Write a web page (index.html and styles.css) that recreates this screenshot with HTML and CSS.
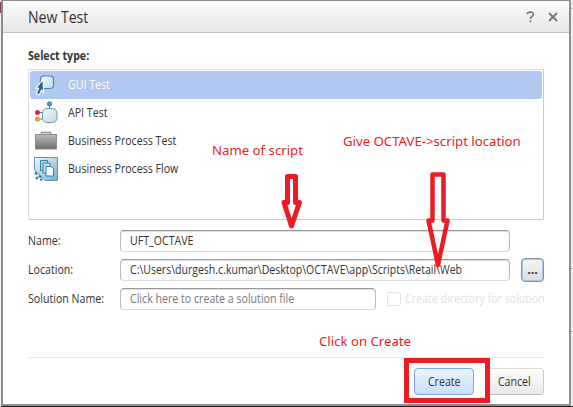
FILE: index.html
```html
<!DOCTYPE html>
<html lang="en">
<head>
<meta charset="utf-8">
<title>New Test</title>
<link rel="stylesheet" href="styles.css">
</head>
<body>
<main class="dialog">
  <header class="titlebar">
    <h1><span class="t">New Test</span></h1>
    <svg class="help" width="9" height="12" viewBox="0 0 9 12"><path d="M1.200 3.200C1.200 .5 7.400.3 7.400 3.200 7.400 5.300 4.400 5.300 4.400 8M4.400 9.300v2" fill="none" stroke="#777" stroke-width="1.600"/></svg>
    <svg width="10" height="10" viewBox="0 0 10 10"><path d="M1 1l8 8M9 1L1 9" stroke="#777" stroke-width="1.800"/></svg>
  </header>
  <section class="content">
    <h2><span class="t">Select type:</span></h2>
    <ul class="types">
      <li class="selected">
        <svg width="24" height="24" viewBox="0 0 24 24"><defs><linearGradient id="pane" x2="1" y2="1"><stop stop-color="#f4f8fa"/><stop offset="1" stop-color="#c3d8e2"/></linearGradient></defs><rect x="6.500" y="3" width="13" height="12.500" rx="3.500" fill="url(#pane)" stroke="#4d85a5" stroke-width="1.200"/><path d="M9 6.500L2 15.200l2.600.1-2.300 5.200 2.900 1.200 2.400-4.700 2 2.600z" fill="#25607f" stroke="#fff" stroke-width="1.100"/></svg>
        <span class="t">GUI Test</span></li>
      <li>
        <svg width="24" height="24" viewBox="0 0 24 24"><path d="M15.500 3v5M4 11.500h6M4 18h6" stroke="#777"/><rect x="8.500" y="7.500" width="14.500" height="14" rx="4.500" fill="url(#pane)" stroke="#6b9ab4"/><circle cx="15.500" cy="2.800" r="2.600" fill="#4b8fc4"/><circle cx="3.500" cy="11.500" r="2.500" fill="#d92c36"/><circle cx="3.500" cy="18" r="2.600" fill="#ef9a42"/></svg>
        <span class="t">API Test</span></li>
      <li>
        <svg width="24" height="24" viewBox="0 0 24 24"><defs><linearGradient id="case" x2="0" y2="1"><stop stop-color="#bbb"/><stop offset="1" stop-color="#6e6e6e"/></linearGradient></defs><path d="M7.500 6V3.500h9V6" fill="none" stroke="#8b8b8b" stroke-width="1.300"/><rect x="1.500" y="5.500" width="21" height="14.500" fill="url(#case)" stroke="#8b8b8b"/></svg>
        <span class="t">Business Process Test</span></li>
      <li>
        <svg width="24" height="24" viewBox="0 0 24 24"><defs><linearGradient id="flow" x2="1" y2="1"><stop stop-color="#f4f9fb"/><stop offset="1" stop-color="#78acc8"/></linearGradient></defs><path d="M.5.500h23v23H11L.5 13z" fill="url(#flow)" stroke="#5b96b7"/><g stroke="#2f83ae"><path fill="#b4d5e6" d="M6.500 3.500h7v10h-7z"/><path fill="#c8e1ed" d="M9 6h7v10H9z"/><path fill="#f6fafc" d="M12 9.500h5l2.500 2V19H12z"/></g><path d="M1 15.500l2 2M5 18.500l2 2M2 22l2-2M6.500 23.500l1.500-1.500" stroke="#287aa4" stroke-width="2.200"/></svg>
        <span class="t">Business Process Flow</span></li>
    </ul>
    <div class="row">
      <label><span class="t">Name:</span></label>
      <div class="field"><span class="t">UFT_OCTAVE</span></div>
    </div>
    <div class="row">
      <label><span class="t">Location:</span></label>
      <div class="field"><span class="t path">C:\Users\durgesh.c.kumar\Desktop\OCTAVE\app\Scripts\Retail\Web</span></div>
      <button class="browse">...</button>
    </div>
    <div class="row">
      <label><span class="t">Solution Name:</span></label>
      <div class="field short"><span class="t">Click here to create a solution file</span></div>
      <div class="check"><i></i><span class="t">Create directory for solution</span></div>
    </div>
    <footer>
      <button class="create"><span class="t">Create</span></button>
      <button class="cancel"><span class="t">Cancel</span></button>
    </footer>
  </section>
</main>
<p class="note note-name">Name of script</p>
<p class="note note-location">Give OCTAVE-&gt;script location</p>
<p class="note note-create">Click on Create</p>
<svg class="arrow arrow-name" width="22" height="56" viewBox="0 0 22 56"><path d="M6.500 2.500h8v26h4L10.500 52 3 28.500h3.500z"/></svg>
<svg class="arrow arrow-location" width="26" height="96" viewBox="0 0 26 96"><path d="M7.500 2.500h11v46h4L13 93 3.500 48.500h4z"/></svg>
<div class="highlight"></div>
</body>
</html>
```
FILE: styles.css
```css
* { box-sizing: border-box; }
body {
  margin: 0;
  width: 573px;
  height: 407px;
  padding: 0 2px 1px 1px;
  position: relative;
  overflow: hidden;
  background: linear-gradient(#221f22, #221f22) 1px 406px / 572px 1px no-repeat,
    linear-gradient(#8b4068, #8b4068) 0 2px / 1px 11px no-repeat,
    linear-gradient(#bbb, #bbb) 570px 8px / 3px 1px no-repeat,
    linear-gradient(#bbb, #bbb) 570px 268px / 3px 1px no-repeat,
    linear-gradient(#bbb, #bbb) 570px 331px / 3px 1px no-repeat,
    #f0f0f2;
  font: 12.5px/16px "Open Sans", sans-serif;
  color: #333;
}
h1, h2, p, ul { margin: 0; padding: 0; }
.dialog {
  width: 570px;
  height: 406px;
  border: 2px solid #8e8e8e;
  border-top-width: 1px;
  background: #fff;
}
.t {
  display: inline-block;
  white-space: nowrap;
  transform: scaleX(.85);
  transform-origin: 0 50%;
}
.titlebar {
  display: flex;
  align-items: center;
  height: 32px;
  padding: 0 11px 0 25px;
  background: linear-gradient(#fcfcfc, #e7e7e7);
  border-bottom: 1px solid #c4c4c4;
}
h1 { flex: 1; font-size: 16.5px; font-weight: 400; line-height: 30px; }
.help { margin-right: 13px; }
.content { padding: 14px 25px 0; }
h2 { font-size: 12.5px; line-height: 18px; height: 22px; }
.types {
  list-style: none;
  width: 516px;
  height: 151px;
  padding: 1px;
  border: 1px solid #c9c9c9;
  border-top-color: #ddd;
  border-left-color: #ddd;
}
.types li {
  display: flex;
  align-items: center;
  gap: 10px;
  height: 28px;
  padding-left: 4px;
  border-radius: 3px;
}
.types .selected { background: #b1c8f0; color: #fff; }
.row { display: flex; height: 22px; margin-top: 7px; align-items: center; }
.types + .row { margin-top: 10px; }
.row label { width: 92px; }
.field {
  width: 390px;
  height: 22px;
  padding: 2px 9px;
  border: 1px solid #aaa;
  border-color: #999 #bbb #ddd;
  border-radius: 4px;
  box-shadow: inset 0 1px 1px #ddd;
}
.path { transform: scaleX(.842); }
.short { width: 257px; color: #777; }
button {
  font: inherit;
  color: #333;
  padding: 0;
  border: 1px solid #aaa;
  border-radius: 4px;
  background: linear-gradient(#fff, #e8e8e8);
}
.browse {
  width: 23px;
  height: 24px;
  margin-left: 11px;
  border-color: #888f9b;
  background: linear-gradient(#f5f5f5, #dedede);
  box-shadow: inset 0 0 0 1px #a9c9f5;
  font-weight: 700;
}
.check { display: flex; align-items: center; margin-left: 11px; color: #e3e3e3; width: 157px; }
.check i { width: 14px; height: 14px; margin-right: 4px; border: 1px solid #e3e3e3; border-radius: 2px; flex: none; }
footer {
  display: flex;
  justify-content: flex-end;
  gap: 11px;
  width: 516px;
  margin-top: 47px;
  padding-top: 10px;
  border-top: 1px solid #e7e7e7;
}
footer button { width: 59px; height: 27px; border-color: #ddd #ccc #bbb; }
footer .create { width: 60px; background: linear-gradient(#edf4fe, #c9defb); border-color: #77a8e8; }
footer .t { transform-origin: 50% 50%; }
.note { position: absolute; color: #ed1c24; font: 13.2px/18px "Noto Sans", sans-serif; white-space: nowrap; }
.note-name { left: 212px; top: 141px; }
.note-location { left: 343px; top: 132px; }
.note-create { left: 319px; top: 332px; }
.arrow { position: absolute; fill: none; stroke: #ed1c24; stroke-width: 5; stroke-linejoin: round; }
.arrow-name { left: 281px; top: 174px; }
.arrow-location { left: 425px; top: 172px; stroke-width: 4.5; }
.highlight { position: absolute; left: 404px; top: 358px; width: 86px; height: 45px; border: 5px solid #ed1c24; }
```
